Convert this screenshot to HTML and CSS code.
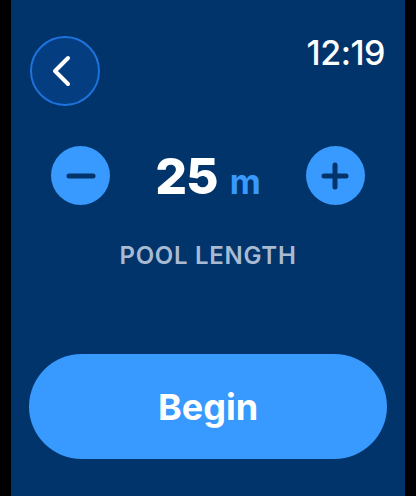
FILE: index.html
```html
<!DOCTYPE html>
<html lang="en">
<head>
    <meta charset="UTF-8">
    <meta name="viewport" content="width=device-width, initial-scale=1.0">
    <title>Pool Length</title>
    <link rel="stylesheet" href="styles.css">
</head>
<body>
    <div class="screen">
        <div class="top-bar">
            <button class="back-btn" aria-label="Back">
                <svg width="22" height="32" viewBox="0 0 22 32">
                    <polyline points="16,3 3,16 16,29" fill="none" stroke="#fff" stroke-width="4" stroke-linecap="round" stroke-linejoin="round"/>
                </svg>
            </button>
            <span class="clock">12:19</span>
        </div>

        <div class="stepper">
            <button class="step-btn" aria-label="Decrease">
                <svg width="30" height="30" viewBox="0 0 30 30">
                    <line x1="3" y1="15" x2="27" y2="15" stroke="#01346a" stroke-width="5" stroke-linecap="round"/>
                </svg>
            </button>
            <div class="value">
                <span class="number">25</span>
                <span class="unit">m</span>
            </div>
            <button class="step-btn" aria-label="Increase">
                <svg width="30" height="30" viewBox="0 0 30 30">
                    <line x1="4" y1="15" x2="26" y2="15" stroke="#01346a" stroke-width="5" stroke-linecap="round"/>
                    <line x1="15" y1="4" x2="15" y2="26" stroke="#01346a" stroke-width="5" stroke-linecap="round"/>
                </svg>
            </button>
        </div>

        <div class="label">POOL LENGTH</div>

        <button class="begin-btn">Begin</button>
    </div>
</body>
</html>
```

FILE: styles.css
```css
body {
    margin: 0;
    background: #000;
    font-family: Inter, "Noto Sans", sans-serif;
}
.screen {
    width: 394px;
    height: 496px;
    margin: 0 11px;
    background: #01346a;
    display: flex;
    flex-direction: column;
    box-sizing: border-box;
    padding-top: 36px;
}
button {
    border: none;
    cursor: pointer;
    padding: 0;
    font-family: inherit;
}
.top-bar {
    display: flex;
    justify-content: space-between;
    align-items: flex-start;
    padding: 0 20px 0 19px;
}
.back-btn {
    width: 70px;
    height: 70px;
    border-radius: 50%;
    background: #053e80;
    border: 2px solid #1d72dc;
    box-sizing: border-box;
    display: flex;
    align-items: center;
    justify-content: center;
    padding-right: 4px;
}
.clock {
    color: #fff;
    font-size: 34px;
    font-weight: 500;
    line-height: 1;
    letter-spacing: -0.5px;
}
.stepper {
    display: flex;
    align-items: center;
    justify-content: space-between;
    padding: 0 40px;
    margin-top: 40px;
}
.step-btn {
    width: 59px;
    height: 59px;
    border-radius: 50%;
    background: #3899fe;
    display: flex;
    align-items: center;
    justify-content: center;
}
.value {
    display: flex;
    align-items: baseline;
    gap: 12px;
}
.number {
    color: #fff;
    font-size: 50px;
    font-weight: 800;
    line-height: 1;
    letter-spacing: -1px;
}
.unit {
    color: #3899fe;
    font-size: 34px;
    font-weight: 700;
    line-height: 1;
}
.label {
    color: #a9bbd3;
    font-size: 24px;
    font-weight: 600;
    letter-spacing: 0.7px;
    text-align: center;
    margin-top: 36px;
}
.begin-btn {
    margin: 84px 18px 0;
    height: 105px;
    border-radius: 53px;
    background: #3899fe;
    color: #fff;
    font-size: 36px;
    font-weight: 700;
}
```
